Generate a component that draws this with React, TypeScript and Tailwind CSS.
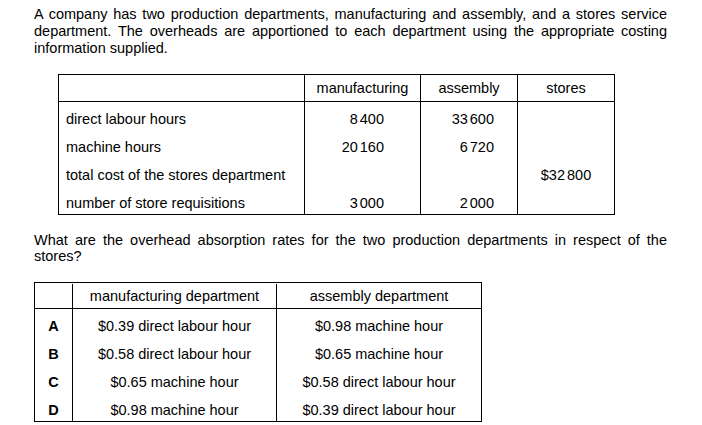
const font = "font-['Liberation_Sans',Arial,sans-serif]";

// numbers are printed with a narrow gap between thousands
type Num = [string, string] | null;

const costRows: { label: string; mfg: Num; asm: Num; stores: Num }[] = [
  { label: "direct labour hours", mfg: ["8", "400"], asm: ["33", "600"], stores: null },
  { label: "machine hours", mfg: ["20", "160"], asm: ["6", "720"], stores: null },
  { label: "total cost of the stores department", mfg: null, asm: null, stores: ["$32", "800"] },
  { label: "number of store requisitions", mfg: ["3", "000"], asm: ["2", "000"], stores: null },
];

const options = [
  { key: "A", mfg: "$0.39 direct labour hour", asm: "$0.98 machine hour" },
  { key: "B", mfg: "$0.58 direct labour hour", asm: "$0.65 machine hour" },
  { key: "C", mfg: "$0.65 machine hour", asm: "$0.58 direct labour hour" },
  { key: "D", mfg: "$0.98 machine hour", asm: "$0.39 direct labour hour" },
];

function Amount({ value }: { value: Num }) {
  if (!value) return null;
  return (
    <span className="whitespace-nowrap">
      {value[0]}
      <span className="ml-[2px]">{value[1]}</span>
    </span>
  );
}

// full-width line, spread edge to edge like justified print
function Line({ children, last = false }: { children: React.ReactNode; last?: boolean }) {
  return (
    <div className={last ? "whitespace-nowrap" : "whitespace-nowrap text-justify [text-align-last:justify]"}>
      {children}
    </div>
  );
}

export default function App() {
  return (
    <div className={`${font} text-[14.5px] text-black bg-white w-[702px] h-[425px] overflow-hidden`}>
      {/* intro */}
      <div className="pl-[34px] pt-[6px] w-[667px] leading-[17px]">
        <Line>A company has two production departments, manufacturing and assembly, and a stores service</Line>
        <Line>department. The overheads are apportioned to each department using the appropriate costing</Line>
        <Line last>information supplied.</Line>
      </div>

      {/* data table */}
      <div className="ml-[58px] mt-[17px] w-[557px] border border-black">
        <div className="grid grid-cols-[245px_116px_97px_97px] border-b border-black h-[27px] leading-[26px] text-center">
          <div />
          <div className="border-l border-black">manufacturing</div>
          <div className="border-l border-black">assembly</div>
          <div className="border-l border-black">stores</div>
        </div>
        {costRows.map((row) => (
          <div key={row.label} className="grid grid-cols-[245px_116px_97px_97px] h-[28px] leading-[22px]">
            <div className="pl-[7px] pt-[6px]">{row.label}</div>
            <div className="border-l border-black pt-[6px] pr-[36px] text-right">
              <Amount value={row.mfg} />
            </div>
            <div className="border-l border-black pt-[6px] pr-[23px] text-right">
              <Amount value={row.asm} />
            </div>
            <div className="border-l border-black pt-[6px] text-center">
              <Amount value={row.stores} />
            </div>
          </div>
        ))}
      </div>

      {/* question */}
      <div className="pl-[34px] mt-[17px] w-[667px] leading-[16px]">
        <Line>What are the overhead absorption rates for the two production departments in respect of the</Line>
        <Line last>stores?</Line>
      </div>

      {/* answer options */}
      <div className="ml-[34px] mt-[18px] w-[448px] border border-black">
        <div className="grid grid-cols-[37px_204px_205px] border-b border-black h-[26px] leading-[24px] pt-[1px] text-center">
          <div />
          <div className="border-l border-black">manufacturing department</div>
          <div className="border-l border-black">assembly department</div>
        </div>
        {options.map((opt) => (
          <div key={opt.key} className="grid grid-cols-[37px_204px_205px] h-[28px] leading-[21px] text-center">
            <div className="pt-[7px] font-bold">{opt.key}</div>
            <div className="border-l border-black pt-[7px]">{opt.mfg}</div>
            <div className="border-l border-black pt-[7px]">{opt.asm}</div>
          </div>
        ))}
      </div>
    </div>
  );
}
